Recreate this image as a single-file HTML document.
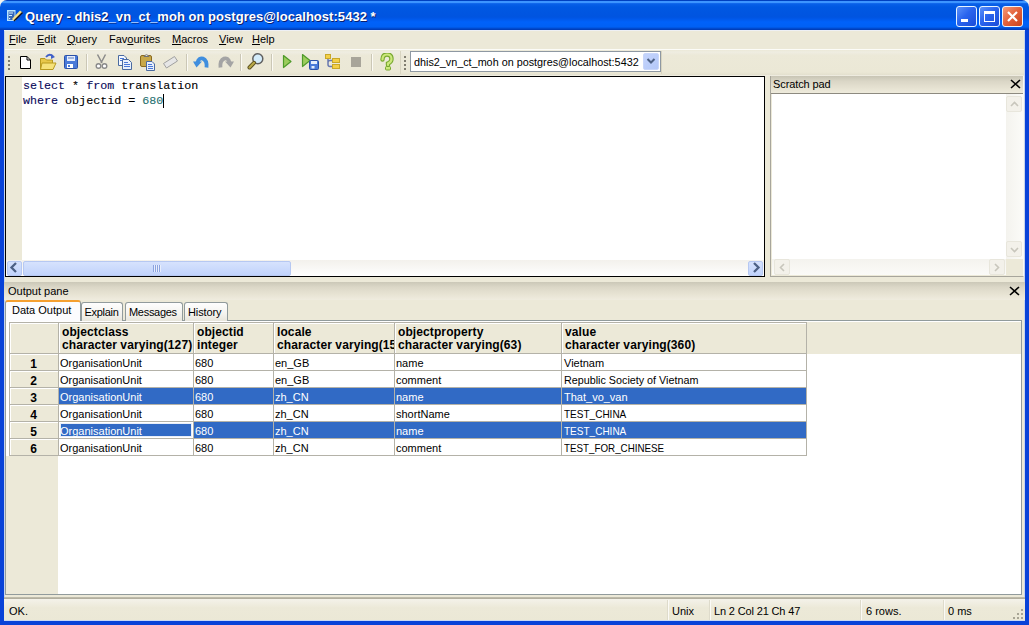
<!DOCTYPE html>
<html><head><meta charset="utf-8">
<style>
*{margin:0;padding:0;box-sizing:border-box}
html,body{width:1029px;height:625px;overflow:hidden;background:#f4f4f0}
body{position:relative;font-family:"Liberation Sans",sans-serif;font-size:11px;color:#000}
.a{position:absolute}
#title{left:0;top:0;width:1029px;height:30px;background:linear-gradient(#0040c0 0px,#0040c0 1px,#3d95ff 1px,#3d95ff 3px,#1a70f0 3px,#0860e8 4px,#0058e2 7px,#0054e0 17px,#0058ea 19px,#0062fa 22px,#0060f4 27px,#0050d8 28px,#0038b0 30px);border-radius:7px 7px 0 0}
#ttext{left:25px;top:9px;color:#fff;font-weight:bold;font-size:13px;text-shadow:1px 1px 0 #0a1e6e;white-space:nowrap;letter-spacing:0.04px}
.wb{top:6px;width:21px;height:21px;border:1px solid #e8f4ff;border-radius:3px;background:linear-gradient(135deg,#5c92fa,#2a64ee 45%,#1a4cd8)}
#wclose{background:linear-gradient(135deg,#f49a78,#e2603a 50%,#c8441e)}
#frameL{left:0;top:30px;width:4px;height:595px;background:#0842d8}
#frameR{left:1025px;top:30px;width:4px;height:595px;background:#0842d8}
#frameB{left:0;top:621px;width:1029px;height:4px;background:#0842d8}
#main{left:4px;top:30px;width:1021px;height:591px;background:#ece9d8}
.menu{top:33px;white-space:nowrap;font-size:11px;line-height:13px}
.menu u{text-decoration:underline;text-underline-offset:1px}
#toolbar{left:5px;top:50px;width:1019px;height:26px;background:linear-gradient(#ece9d8,#efede2 8%,#ece9d8 20%,#ebe8d6 85%,#e4e1cf 95%,#f4f2ea)}
.sep{top:54px;height:17px;background:#cbc7b6;border-right:1px solid #fbfaf4;width:2px}
.grip{width:2px;height:2px;background:#807d70}
#editor{left:5px;top:76px;width:760px;height:201px;border:1px solid #000;border-bottom-width:2px;background:#fff}
#margin{left:0;top:0;width:16px;height:183px;background:#ece9d8}
.code{font-family:"Liberation Mono",monospace;font-size:11.7px;white-space:pre;color:#000;line-height:15px;-webkit-text-stroke:0.1px currentColor}
#scratch{left:770px;top:76px;width:254px;height:201px;background:#ece9d8;border:1px solid #a8a69c;border-top:none;border-right-color:#f8f8f4}
.sbtn{width:16px;height:15px;border:1px solid #b6c8f2;border-radius:2px;background:linear-gradient(#d6e2fd,#c1d3fb)}
.dis{border:1px solid #e8e6dc;background:#f3f1ea;border-radius:2px}
.grid{left:9px;top:322px;width:1013px;height:273px;background:#fff;border:1px solid #a3a095}
.c{position:absolute;white-space:nowrap;overflow:hidden;font-size:11px;line-height:16px;padding-left:1px;padding-top:1px}
.sx{display:inline-block;transform-origin:0 0}
.hd{white-space:nowrap;overflow:hidden;font-weight:bold;font-size:12px;line-height:12.6px;padding-left:2px;padding-top:2px;letter-spacing:0.1px;background:#ece9d8;border-left:1px solid #fff;border-top:1px solid #fff}
.rh{font-weight:bold;font-size:12px;line-height:16px;padding-top:1px;padding-right:2px;text-align:center;background:#ece9d8;border-left:1px solid #fff;border-top:1px solid #fff}
.vl{position:absolute;width:1px;background:#b4b2a8}
.hl{position:absolute;height:1px;background:#b4b2a8}
.sel{background:#316ac5;color:#fff}
.tab{top:302px;height:19px;border:1px solid #919b9c;border-bottom:none;border-radius:3px 3px 0 0;background:linear-gradient(#fefefe,#f4f3ee 60%,#e8e6dc);font-size:11px;line-height:17px;padding-left:3px;letter-spacing:-0.3px;padding-top:1px}
.st{top:605px;font-size:11px;white-space:nowrap}
.ssep{top:600px;width:2px;height:20px;border-left:1px solid #dedbcb;border-right:1px solid #fbfaf6}
</style></head><body>
<div id="title" class="a"></div>
<svg class="a" style="left:4px;top:6px" width="22" height="20" viewBox="0 0 22 20">
<rect x="3" y="4" width="8.5" height="11" fill="#b8e4ff"/>
<rect x="4.5" y="5.5" width="6" height="8.5" fill="#3566b8"/>
<path d="M5 7h4M5 9.5h3" stroke="#d8f0ff" stroke-width="1"/><rect x="5" y="12" width="1.2" height="1.2" fill="#e0f4ff"/>
<path d="M8 13 L16 4.5 L18.5 6.5 L10 15 Z" fill="#f4e08a"/>
<path d="M18.5 6.5 L10 15" stroke="#101020" stroke-width="1.4"/>
</svg>
<div id="ttext" class="a">Query - dhis2_vn_ct_moh on postgres@localhost:5432 *</div>
<div class="a wb" style="left:956px"><div class="a" style="left:4px;top:12px;width:7px;height:3px;background:#fff"></div></div>
<div class="a wb" style="left:979px"><div class="a" style="left:4px;top:4px;width:11px;height:11px;border:1px solid #fff;border-top-width:3px"></div></div>
<div id="wclose" class="a wb" style="left:1002px"><svg class="a" style="left:3px;top:3px" width="13" height="13"><path d="M2 2 L11 11 M11 2 L2 11" stroke="#fff" stroke-width="2.2"/></svg></div>
<div id="frameL" class="a"></div><div id="frameR" class="a"></div><div id="frameB" class="a"></div>
<div id="main" class="a"></div>
<div class="a" style="left:4px;top:30px;width:1px;height:591px;background:#c6d4ec"></div>
<div class="a" style="left:1024px;top:30px;width:1px;height:591px;background:#c6d4ec"></div>
<div class="a" style="left:4px;top:30px;width:1021px;height:1px;background:#eef0f4"></div>

<!-- menu -->
<div class="a" style="left:5px;top:31px;width:1019px;height:18px;background:#ece9d8"></div>
<div class="a menu" style="left:9px"><u>F</u>ile</div>
<div class="a menu" style="left:37px"><u>E</u>dit</div>
<div class="a menu" style="left:67px"><u>Q</u>uery</div>
<div class="a menu" style="left:109px">Fav<u>o</u>urites</div>
<div class="a menu" style="left:172px"><u>M</u>acros</div>
<div class="a menu" style="left:219px"><u>V</u>iew</div>
<div class="a menu" style="left:252px"><u>H</u>elp</div>

<div id="toolbar" class="a"></div>
<div class="a" style="left:5px;top:49px;width:1019px;height:1px;background:#fcfcf8"></div>
<!-- grips -->
<div class="a grip" style="left:8px;top:56px"></div><div class="a grip" style="left:8px;top:60px"></div><div class="a grip" style="left:8px;top:64px"></div><div class="a grip" style="left:8px;top:68px"></div>
<div class="a grip" style="left:404px;top:56px"></div><div class="a grip" style="left:404px;top:60px"></div><div class="a grip" style="left:404px;top:64px"></div><div class="a grip" style="left:404px;top:68px"></div>
<div class="a sep" style="left:86px"></div>
<div class="a sep" style="left:186px"></div>
<div class="a sep" style="left:240px"></div>
<div class="a sep" style="left:271px"></div>
<div class="a sep" style="left:371px"></div>
<div class="a" style="left:400px;top:51px;width:1px;height:23px;background:#d8d4c0"></div>
<div class="a" style="left:661px;top:51px;width:1px;height:23px;background:#d8d4c0"></div>

<!-- toolbar icons -->
<svg class="a" style="left:18px;top:53px" width="380" height="20" viewBox="0 0 380 20">
 <!-- new -->
 <path d="M2.5 3.5 H9 L12.5 7 V15.5 H2.5 Z" fill="#fff" stroke="#000"/>
 <path d="M9 3.5 V7 H12.5" fill="none" stroke="#000"/>
 <!-- open -->
 <path d="M22.5 5.5 H27 L28.5 7 H34.5 V16.5 H22.5 Z" fill="#e8c84a" stroke="#b89a20"/>
 <path d="M24 10 H38 L35 16.5 H22.5 Z" fill="#f6e27a" stroke="#b89a20"/>
 <path d="M28 4 Q31 0 35 3" fill="none" stroke="#4060c8" stroke-width="1.8"/><path d="M33 1 L37 4 L33 6 Z" fill="#4060c8"/>
 <!-- save -->
 <rect x="46.5" y="2.5" width="13" height="13" rx="1" fill="#4a7ad8" stroke="#2a50a8"/>
 <rect x="49" y="3" width="8" height="5" fill="#e6eefc"/>
 <path d="M50 5 H56" stroke="#5a7ac0"/>
 <rect x="49" y="11" width="6" height="4" fill="#fff"/><rect x="50" y="12" width="2" height="2" fill="#4a7ad8"/>
 <!-- cut -->
 <path d="M79.5 1.5 L84 10 M87.5 1.5 L83 10" stroke="#8a8a8a" stroke-width="1.5"/>
 <circle cx="80.5" cy="13" r="2.3" fill="#fff" stroke="#8a8a8a" stroke-width="1.4"/>
 <circle cx="86.5" cy="13" r="2.3" fill="#fff" stroke="#8a8a8a" stroke-width="1.4"/>
 <!-- copy -->
 <path d="M100.5 2.5 H106 L108.5 5 V12.5 H100.5 Z" fill="#f4f8ff" stroke="#4a6aa0"/>
 <path d="M102 5.5 H106 M102 7.5 H104" stroke="#4a78d8"/>
 <path d="M104.5 6.5 H110.5 L113.5 9.5 V16.5 H104.5 Z" fill="#e8f0fc" stroke="#4a6aa0"/>
 <path d="M106 9.5 H110 M106 11.5 H112 M106 13.5 H112" stroke="#4a78d8"/>
 <!-- paste -->
 <rect x="122.5" y="2.5" width="11" height="11" rx="1.5" fill="#c8a848" stroke="#8a6a20"/>
 <path d="M126 3.5 Q128.5 0 131 3.5 Z" fill="#fff" stroke="#707070"/>
 <path d="M128.5 8.5 H134 L136.5 11 V17.5 H128.5 Z" fill="#e8f0fc" stroke="#4a6aa0"/>
 <path d="M130 11.5 H134 M130 13.5 H135 M130 15.5 H135" stroke="#4a78d8"/>
 <!-- eraser -->
 <path d="M145.5 10.5 L156.5 3.5 L159.5 8 L148.5 15 Z" fill="#e6e6e6" stroke="#a0a0a0" stroke-linejoin="round"/>
 <!-- undo -->
 <path d="M188.5 14.5 C189.5 4.5 181 2.5 179.5 9.5" fill="none" stroke="#3f8ede" stroke-width="3.8"/>
 <path d="M175 8.5 L184 8.5 L178.5 14.5 Z" fill="#3f8ede"/>
 <!-- redo -->
 <path d="M202.5 14.5 C201.5 4.5 210 2.5 211.5 9.5" fill="none" stroke="#a4a4a4" stroke-width="3.8"/>
 <path d="M216 8.5 L207 8.5 L212.5 14.5 Z" fill="#a4a4a4"/>
 <!-- find -->
 <circle cx="239.8" cy="5.8" r="5" fill="#d4ecfa" stroke="#606060" stroke-width="1.5"/>
 <path d="M236 9.8 L231.5 14.5" stroke="#5a5020" stroke-width="4" stroke-linecap="round"/>
 <path d="M236 9.8 L231.5 14.5" stroke="#b8a848" stroke-width="2.2" stroke-linecap="round"/>
 <!-- execute -->
 <path d="M265.5 2.5 L273 8.5 L265.5 14.5 Z" fill="#9ccc5c" stroke="#4e9a2a" stroke-width="1.2" stroke-linejoin="round"/>
 <!-- execute to file -->
 <path d="M284.5 1.5 L292 7.5 L284.5 13.5 Z" fill="#9ccc5c" stroke="#4e9a2a" stroke-width="1.2" stroke-linejoin="round"/>
 <rect x="291.5" y="7.5" width="9" height="9" rx="1" fill="#4a7ad8" stroke="#2a50a8"/>
 <rect x="293" y="8" width="6" height="3" fill="#e6eefc"/>
 <rect x="293.5" y="13" width="3" height="2.5" fill="#e6eefc"/>
 <!-- explain -->
 <rect x="307.5" y="1.5" width="5" height="4" fill="#f4d048" stroke="#c8a828"/>
 <rect x="314.5" y="5.5" width="7" height="4" fill="#f4d048" stroke="#c8a828"/>
 <rect x="314.5" y="11.5" width="7" height="4" fill="#f4d048" stroke="#c8a828"/>
 <path d="M310 6 V11.5 Q310 13.5 312 13.5 H314 M310 9.5 Q310 7.5 312 7.5 H314" fill="none" stroke="#6a7ab0" stroke-width="1.5"/>
 <!-- stop -->
 <rect x="333" y="4" width="10" height="10" fill="#a8a59a"/>
 <!-- help -->
 <path d="M364.5 6.5 Q364.5 1.5 369 1.5 Q373.5 1.5 373.5 6 Q373.5 9 370 10.5 V12" fill="none" stroke="#78a830" stroke-width="4.4" stroke-linecap="round"/>
 <path d="M364.5 6.5 Q364.5 1.5 369 1.5 Q373.5 1.5 373.5 6 Q373.5 9 370 10.5 V12" fill="none" stroke="#cce87c" stroke-width="2.2" stroke-linecap="round"/>
 <rect x="367.5" y="13.5" width="5" height="3.5" rx="1" fill="#cce87c" stroke="#78a830"/>
</svg>

<!-- combo -->
<div class="a" style="left:410px;top:51px;width:251px;height:21px;border:1px solid #8e98a2;background:#fff"></div>
<div class="a" style="left:414px;top:56px;font-size:10.8px;white-space:nowrap">dhis2_vn_ct_moh on postgres@localhost:5432</div>
<div class="a" style="left:643px;top:53px;width:16px;height:17px;border-radius:2px;background:linear-gradient(135deg,#c4d4fc,#b4c8f8);border:1px solid #c8d6fa"></div>
<svg class="a" style="left:646px;top:57px" width="10" height="8"><path d="M1.5 2 L5 5.5 L8.5 2" fill="none" stroke="#4d6185" stroke-width="2"/></svg>

<!-- editor -->
<div id="editor" class="a">
 <div id="margin" class="a"></div>
 <div class="a code" style="top:2px;left:17px"><span style="color:#0a0a5a">select</span> <span>*</span> <span style="color:#0a0a5a">from</span> translation</div>
 <div class="a code" style="top:17px;left:17px"><span style="color:#0a0a5a">where</span> objectid = <span style="color:#1f7070">680</span></div>
 <div class="a" style="left:157px;top:17px;width:1px;height:14px;background:#000"></div>
 <!-- hscroll -->
 <div class="a" style="left:0;top:183px;width:758px;height:16px;background:linear-gradient(#f3f1ec,#fefefe)"></div>
 <div class="a sbtn" style="left:1px;top:184px;width:15px;height:15px"></div>
 <svg class="a" style="left:3px;top:185px" width="10" height="11"><path d="M7 1 L2.5 5.5 L7 10" fill="none" stroke="#4d6185" stroke-width="2.3"/></svg>
 <div class="a sbtn" style="left:17px;top:184px;width:268px;height:15px"></div>
 <div class="a" style="left:147px;top:188px;width:8px;height:7px;background:repeating-linear-gradient(90deg,#8ca4e0 0 1px,#e8eefc 1px 2px)"></div>
 <div class="a sbtn" style="left:742px;top:184px;width:15px;height:15px"></div>
 <svg class="a" style="left:745px;top:185px" width="10" height="11"><path d="M3 1 L7.5 5.5 L3 10" fill="none" stroke="#4d6185" stroke-width="2.3"/></svg>
</div>

<!-- scratch -->
<div id="scratch" class="a">
 <div class="a" style="left:0;top:0;width:252px;height:17px;background:linear-gradient(#c8c5b5,#dad6c6 30%,#e6e2d2 70%,#eeebdc)"></div>
 <div class="a" style="left:2px;top:2px;font-size:11px;letter-spacing:-0.1px">Scratch pad</div>
 <svg class="a" style="left:239px;top:3px" width="11" height="10"><path d="M1 1 L10 9 M10 1 L1 9" stroke="#000" stroke-width="1.6"/></svg>
 <div class="a" style="left:0;top:17px;width:252px;height:1px;background:#8d8a80"></div>
 <div class="a" style="left:1px;top:18px;width:250px;height:181px;background:#fff"></div>
 <div class="a" style="left:235px;top:18px;width:17px;height:165px;background:linear-gradient(90deg,#f4f3ee,#fbfbf8)"></div>
 <div class="a dis" style="left:235px;top:20px;width:16px;height:16px"></div>
 <svg class="a" style="left:239px;top:25px" width="9" height="6"><path d="M1 5 L4.5 1.5 L8 5" fill="none" stroke="#c8c6bc" stroke-width="1.6"/></svg>
 <div class="a dis" style="left:235px;top:165px;width:16px;height:16px"></div>
 <svg class="a" style="left:239px;top:171px" width="9" height="6"><path d="M1 1 L4.5 4.5 L8 1" fill="none" stroke="#c8c6bc" stroke-width="1.6"/></svg>
 <div class="a" style="left:1px;top:183px;width:234px;height:16px;background:linear-gradient(#f4f3ee,#fbfbf8)"></div>
 <div class="a dis" style="left:3px;top:183px;width:16px;height:16px"></div>
 <svg class="a" style="left:8px;top:187px" width="6" height="9"><path d="M5 1 L1.5 4.5 L5 8" fill="none" stroke="#c8c6bc" stroke-width="1.6"/></svg>
 <div class="a dis" style="left:218px;top:183px;width:16px;height:16px"></div>
 <svg class="a" style="left:223px;top:187px" width="6" height="9"><path d="M1 1 L4.5 4.5 L1 8" fill="none" stroke="#c8c6bc" stroke-width="1.6"/></svg>
 <div class="a" style="left:235px;top:183px;width:17px;height:16px;background:#ece9d8"></div>
</div>

<!-- output pane -->
<div class="a" style="left:4px;top:282px;width:1021px;height:18px;background:linear-gradient(#cbc8b8,#dcd8c8 30%,#e8e4d4 70%,#efecdf)"></div>
<div class="a" style="left:8px;top:285px;font-size:11px">Output pane</div>
<svg class="a" style="left:1009px;top:286px" width="11" height="10"><path d="M1 1 L10 9 M10 1 L1 9" stroke="#000" stroke-width="1.6"/></svg>

<!-- tab content panel -->
<div class="a" style="left:5px;top:320px;width:1017px;height:275px;background:#fff;border:1px solid #919b9c"></div>
<div class="a tab" style="left:81px;width:42px;padding-left:2.5px">Explain</div>
<div class="a tab" style="left:125px;width:58px">Messages</div>
<div class="a tab" style="left:184px;width:44px;letter-spacing:-0.1px">History</div>
<div class="a" style="left:5px;top:300px;width:76px;height:21px;border:1px solid #919b9c;border-bottom:none;border-radius:3px 3px 0 0;background:#fcfcfe;border-top:2px solid #f5a030;font-size:11px;padding-left:6px;line-height:15px;padding-top:1px">Data Output</div>
<div class="a" style="left:6px;top:456px;width:52px;height:138px;background:#ece9d8"></div>
<div class="a" style="left:807px;top:322px;width:214px;height:32px;background:#ece9d8"></div>
<div class="a hd" style="left:10px;top:323px;width:48px;height:30px"></div>
<div class="a hd" style="left:59px;top:323px;width:134px;height:30px">objectclass<br>character varying(127)</div>
<div class="a hd" style="left:194px;top:323px;width:79px;height:30px">objectid<br>integer</div>
<div class="a hd" style="left:274px;top:323px;width:120px;height:30px">locale<br>character varying(15)</div>
<div class="a hd" style="left:395px;top:323px;width:166px;height:30px">objectproperty<br>character varying(63)</div>
<div class="a hd" style="left:562px;top:323px;width:244px;height:30px">value<br>character varying(360)</div>
<div class="a rh" style="left:10px;top:354px;width:48px;height:16px">1</div>
<div class="c" style="left:59px;top:354px;width:134px;height:16px;">OrganisationUnit</div>
<div class="c" style="left:194px;top:354px;width:79px;height:16px;">680</div>
<div class="c" style="left:274px;top:354px;width:120px;height:16px;">en_GB</div>
<div class="c" style="left:395px;top:354px;width:166px;height:16px;">name</div>
<div class="c" style="left:562px;top:354px;width:244px;height:16px;padding-left:2px">Vietnam</div>
<div class="a rh" style="left:10px;top:371px;width:48px;height:16px">2</div>
<div class="c" style="left:59px;top:371px;width:134px;height:16px;">OrganisationUnit</div>
<div class="c" style="left:194px;top:371px;width:79px;height:16px;">680</div>
<div class="c" style="left:274px;top:371px;width:120px;height:16px;">en_GB</div>
<div class="c" style="left:395px;top:371px;width:166px;height:16px;">comment</div>
<div class="c" style="left:562px;top:371px;width:244px;height:16px;padding-left:2px"><span class="sx" style="transform:scaleX(0.978)">Republic Society of Vietnam</span></div>
<div class="a rh" style="left:10px;top:388px;width:48px;height:16px">3</div>
<div class="c sel" style="left:59px;top:388px;width:134px;height:16px;">OrganisationUnit</div>
<div class="c sel" style="left:194px;top:388px;width:79px;height:16px;">680</div>
<div class="c sel" style="left:274px;top:388px;width:120px;height:16px;">zh_CN</div>
<div class="c sel" style="left:395px;top:388px;width:166px;height:16px;">name</div>
<div class="c sel" style="left:562px;top:388px;width:244px;height:16px;padding-left:2px">That_vo_van</div>
<div class="a rh" style="left:10px;top:405px;width:48px;height:16px">4</div>
<div class="c" style="left:59px;top:405px;width:134px;height:16px;">OrganisationUnit</div>
<div class="c" style="left:194px;top:405px;width:79px;height:16px;">680</div>
<div class="c" style="left:274px;top:405px;width:120px;height:16px;">zh_CN</div>
<div class="c" style="left:395px;top:405px;width:166px;height:16px;">shortName</div>
<div class="c" style="left:562px;top:405px;width:244px;height:16px;padding-left:2px"><span class="sx" style="transform:scaleX(0.91)">TEST_CHINA</span></div>
<div class="a rh" style="left:10px;top:422px;width:48px;height:16px">5</div>
<div class="c sel" style="left:59px;top:422px;width:134px;height:16px;box-shadow:inset 0 0 0 1px #fff,inset 0 0 0 2px #e8eef8;">OrganisationUnit</div>
<div class="c sel" style="left:194px;top:422px;width:79px;height:16px;">680</div>
<div class="c sel" style="left:274px;top:422px;width:120px;height:16px;">zh_CN</div>
<div class="c sel" style="left:395px;top:422px;width:166px;height:16px;">name</div>
<div class="c sel" style="left:562px;top:422px;width:244px;height:16px;padding-left:2px"><span class="sx" style="transform:scaleX(0.91)">TEST_CHINA</span></div>
<div class="a rh" style="left:10px;top:439px;width:48px;height:16px">6</div>
<div class="c" style="left:59px;top:439px;width:134px;height:16px;">OrganisationUnit</div>
<div class="c" style="left:194px;top:439px;width:79px;height:16px;">680</div>
<div class="c" style="left:274px;top:439px;width:120px;height:16px;">zh_CN</div>
<div class="c" style="left:395px;top:439px;width:166px;height:16px;">comment</div>
<div class="c" style="left:562px;top:439px;width:244px;height:16px;padding-left:2px"><span class="sx" style="transform:scaleX(0.89)">TEST_FOR_CHINESE</span></div>
<div class="a hl" style="left:9px;top:322px;width:798px"></div>
<div class="a hl" style="left:9px;top:353px;width:798px"></div>
<div class="a hl" style="left:9px;top:370px;width:798px"></div>
<div class="a hl" style="left:9px;top:387px;width:798px"></div>
<div class="a hl" style="left:9px;top:404px;width:798px"></div>
<div class="a hl" style="left:9px;top:421px;width:798px"></div>
<div class="a hl" style="left:9px;top:438px;width:798px"></div>
<div class="a hl" style="left:9px;top:455px;width:798px"></div>
<div class="a vl" style="left:9px;top:322px;height:134px"></div>
<div class="a vl" style="left:58px;top:322px;height:134px"></div>
<div class="a vl" style="left:193px;top:322px;height:134px"></div>
<div class="a vl" style="left:273px;top:322px;height:134px"></div>
<div class="a vl" style="left:394px;top:322px;height:134px"></div>
<div class="a vl" style="left:561px;top:322px;height:134px"></div>
<div class="a vl" style="left:806px;top:322px;height:134px"></div>

<!-- status bar -->
<div class="a" style="left:4px;top:597px;width:1021px;height:2px;background:linear-gradient(#c4c1b0,#aca899)"></div>
<div class="a" style="left:4px;top:599px;width:1021px;height:22px;background:linear-gradient(#f4f2ea,#ece9d8 40%,#ebe8d6)"></div>
<div class="a" style="left:4px;top:620px;width:1021px;height:1px;background:#c8d8f4"></div>
<div class="a st" style="left:9px">OK.</div>
<div class="a ssep" style="left:667px"></div>
<div class="a st" style="left:672px">Unix</div>
<div class="a ssep" style="left:709px"></div>
<div class="a st" style="left:714px;letter-spacing:-0.15px">Ln 2 Col 21 Ch 47</div>
<div class="a ssep" style="left:860px"></div>
<div class="a st" style="left:866px">6 rows.</div>
<div class="a ssep" style="left:943px"></div>
<div class="a st" style="left:948px">0 ms</div>
<svg class="a" style="left:1005px;top:606px" width="19" height="14"><g fill="#a8a595"><rect x="16" y="3" width="2" height="2"/><rect x="12" y="7" width="2" height="2"/><rect x="16" y="7" width="2" height="2"/><rect x="8" y="11" width="2" height="2"/><rect x="12" y="11" width="2" height="2"/><rect x="16" y="11" width="2" height="2"/></g></svg>
</body></html>
